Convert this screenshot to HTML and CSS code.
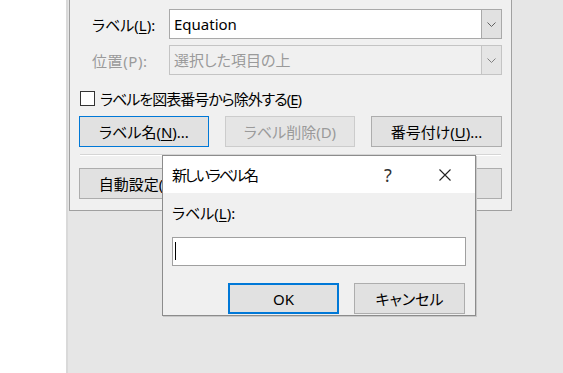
FILE: index.html
```html
<!DOCTYPE html>
<html lang="ja">
<head>
    <meta charset="UTF-8">
    <title>図表番号</title>
    <link rel="stylesheet" href="styles.css">
</head>
<body>
    <div class="page-edge"></div>
    <div class="workspace">
        <!-- Caption dialog (top part scrolled away) -->
        <div class="caption-dialog">
            <div class="field-row">
                <label class="field-label">ラベル(<u>L</u>):</label>
                <div class="combo">
                    <div class="combo-value">Equation</div>
                    <div class="combo-btn">
                        <svg width="9" height="5" viewBox="0 0 9 5"><polyline points="0.5,0.5 4.5,4.5 8.5,0.5" fill="none" stroke="#606060" stroke-width="1"/></svg>
                    </div>
                </div>
            </div>
            <div class="field-row disabled">
                <label class="field-label">位置(P):</label>
                <div class="combo">
                    <div class="combo-value">選択した項目の上</div>
                    <div class="combo-btn">
                        <svg width="9" height="5" viewBox="0 0 9 5"><polyline points="0.5,0.5 4.5,4.5 8.5,0.5" fill="none" stroke="#808080" stroke-width="1"/></svg>
                    </div>
                </div>
            </div>
            <div class="check-row">
                <span class="checkbox"></span>
                <span class="check-text">ラベルを図表番号から除外する(<u>E</u>)</span>
            </div>
            <div class="button-row">
                <button class="btn btn-focus">ラベル名(<u>N</u>)...</button>
                <button class="btn btn-disabled">ラベル削除(D)</button>
                <button class="btn btn-wide">番号付け(<u>U</u>)...</button>
            </div>
            <div class="separator"></div>
            <div class="button-row">
                <button class="btn">自動設定(<u>A</u>)...</button>
                <button class="btn btn-wide">OK</button>
            </div>
        </div>
    </div>

    <!-- New label dialog -->
    <div class="label-dialog">
        <div class="title-bar">
            <span class="title-text">新しいラベル名</span>
            <span class="title-help">?</span>
            <span class="title-close">
                <svg width="12" height="12" viewBox="0 0 12 12"><path d="M0.5 0.5 L11.5 11.5 M11.5 0.5 L0.5 11.5" stroke="#222" stroke-width="1.1" fill="none"/></svg>
            </span>
        </div>
        <div class="dialog-body">
            <label class="body-label">ラベル(<u>L</u>):</label>
            <div class="text-input"><span class="caret"></span></div>
            <div class="dialog-buttons">
                <button class="btn btn-default">OK</button>
                <button class="btn">キャンセル</button>
            </div>
        </div>
    </div>
</body>
</html>
```

FILE: styles.css
```css
* {
    margin: 0;
    padding: 0;
    box-sizing: border-box;
}

body {
    width: 563px;
    height: 373px;
    overflow: hidden;
    display: flex;
    position: relative;
    background: white;
    font-family: "Noto Sans", "Noto Sans CJK JP", sans-serif;
    font-size: 15px;
    font-feature-settings: "palt";
    color: #000;
}

u {
    text-underline-offset: 2px;
}

.page-edge {
    width: 66px;
    background: white;
}

.workspace {
    flex: 1;
    background: #e6e6e6;
    border-left: 2px solid #d9d9d9;
    padding-left: 1px;
}

.caption-dialog {
    width: 443px;
    height: 211px;
    background: #f0f0f0;
    border: 1px solid #a0a0a0;
    border-top: none;
    padding: 9px 9px 0 9px;
}

.field-row {
    display: flex;
    align-items: center;
    height: 30px;
    margin-bottom: 6px;
}

.field-label {
    width: 90px;
    padding-left: 13px;
}

.combo {
    flex: 1;
    height: 30px;
    display: flex;
    background: white;
    border: 1px solid #a9a9a9;
}

.combo-value {
    flex: 1;
    padding-left: 4px;
    line-height: 28px;
}

.combo-btn {
    width: 21px;
    margin: -1px -1px -1px 0;
    border: 1px solid #a9a9a9;
    background: #e1e1e1;
    display: flex;
    align-items: center;
    justify-content: center;
}

.disabled .field-label,
.disabled .combo-value {
    color: #9a9a9a;
}

.disabled .field-label {
    letter-spacing: 0.6px;
}

.disabled .combo {
    background: #f0f0f0;
    border-color: #c4c4c4;
}

.disabled .combo-btn {
    border-color: #c4c4c4;
    background: #e5e5e5;
}

.check-row {
    display: flex;
    align-items: center;
    height: 21px;
    margin-top: 13px;
    padding-left: 1px;
}

.checkbox {
    width: 15px;
    height: 15px;
    border: 1px solid #333;
    background: white;
    margin-right: 5px;
}

.check-text {
    letter-spacing: -1px;
}

.button-row {
    display: flex;
    justify-content: space-between;
    margin-top: 7px;
}

.separator {
    height: 2px;
    margin: 7px 1px 12px 1px;
    border-top: 1px solid #d5d5d5;
    border-bottom: 1px solid #ffffff;
}

.separator + .button-row {
    margin-top: 0;
}

.btn {
    width: 130px;
    height: 31px;
    background: #e1e1e1;
    border: 1px solid #adadad;
    font-family: inherit;
    font-size: 15px;
    font-feature-settings: "palt";
    color: #000;
}

.btn-wide {
    width: 131px;
}

.btn-focus {
    border-color: #0078d7;
}

.btn-disabled {
    background: #e5e5e5;
    border-color: #cccccc;
    color: #9a9a9a;
}

.label-dialog {
    position: absolute;
    left: 162px;
    top: 155px;
    width: 314px;
    height: 161px;
    background: #f0f0f0;
    border: 1px solid #8c8c8c;
    box-shadow: 1px 1px 0 #c8c8c8;
}

.title-bar {
    height: 37px;
    background: white;
    display: flex;
    align-items: center;
    padding: 0 7px 0 9px;
}

.title-text {
    flex: 1;
    letter-spacing: -2px;
}

.title-help,
.title-close {
    width: 46px;
    display: flex;
    justify-content: center;
    align-items: center;
}

.title-help {
    margin-right: 11px;
    font-size: 18px;
    color: #333;
}

.dialog-body {
    padding: 10px 9px 0 9px;
}

.body-label {
    display: block;
    height: 20px;
    line-height: 20px;
}

.text-input {
    height: 29px;
    margin-top: 14px;
    background: white;
    border: 1px solid #a0a0a0;
    padding: 4px 0 0 2px;
}

.caret {
    display: block;
    width: 1px;
    height: 18px;
    background: #000;
}

.dialog-buttons {
    display: flex;
    justify-content: flex-end;
    gap: 15px;
    margin-top: 17px;
    padding-right: 1px;
}

.dialog-buttons .btn {
    width: 111px;
}

.btn-default {
    border: 2px solid #0078d7;
}
```
